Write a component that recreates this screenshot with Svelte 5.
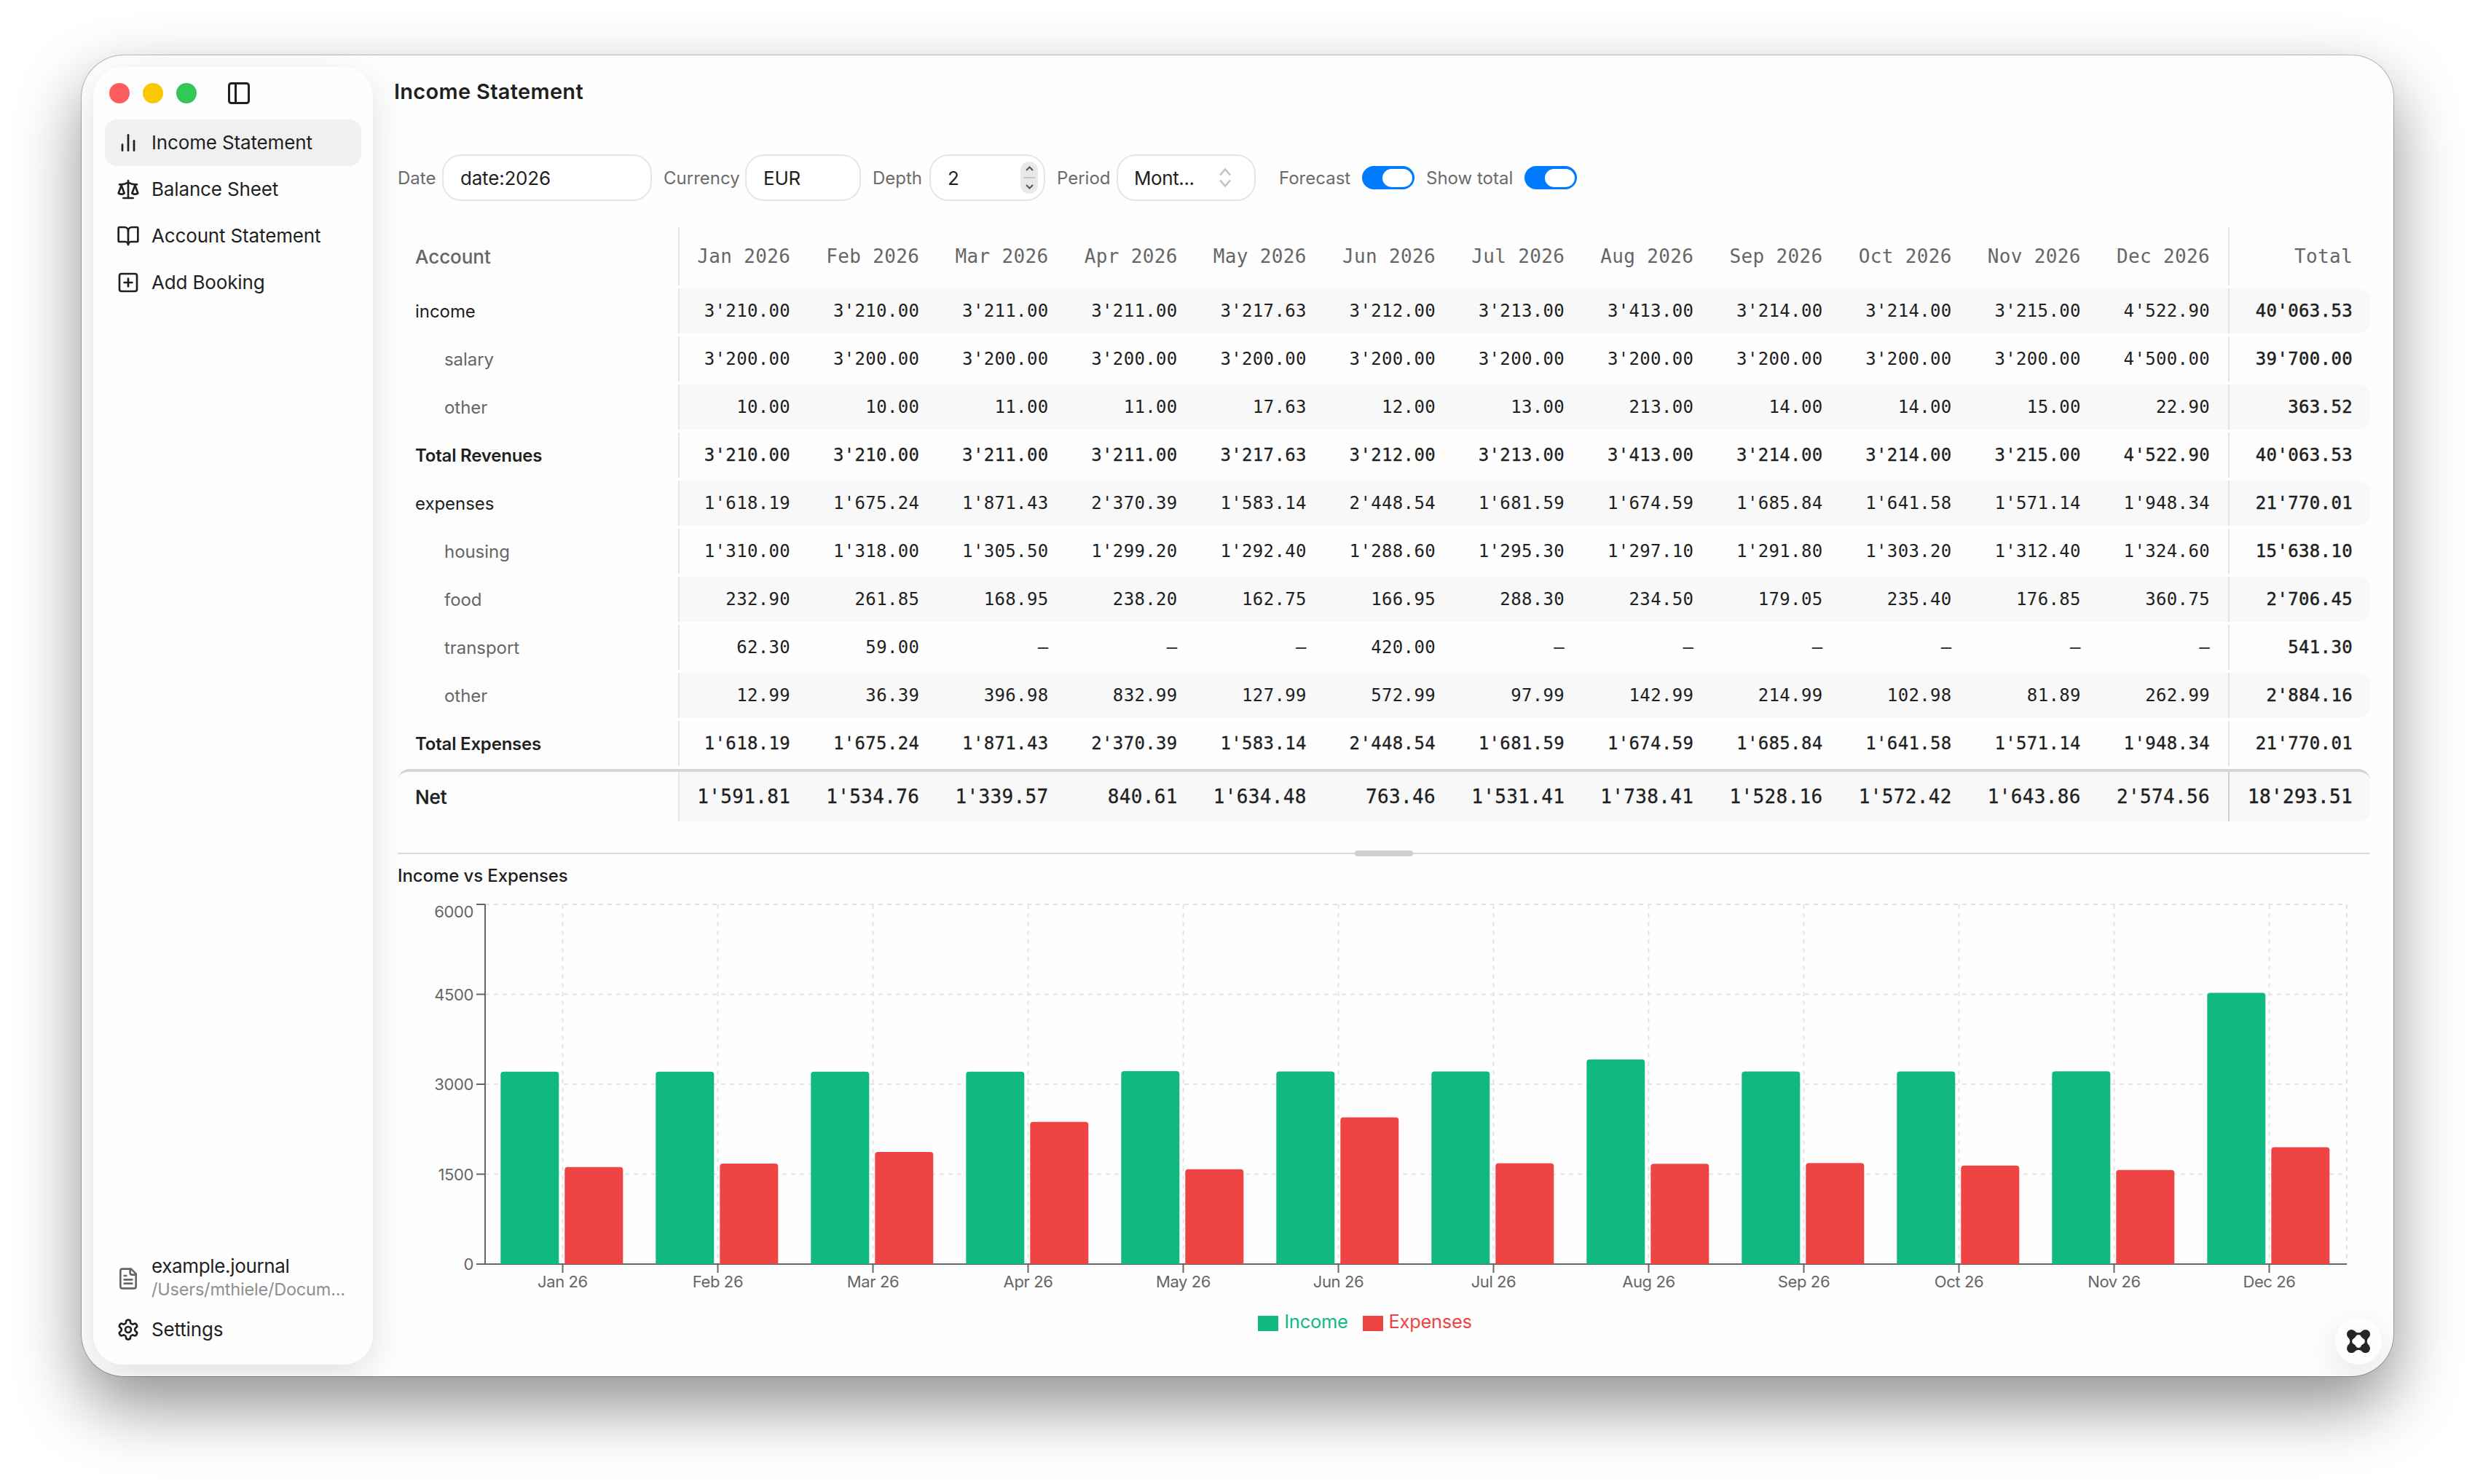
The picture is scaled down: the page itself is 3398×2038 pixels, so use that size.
<script lang="ts">
  type Row = { name: string; kind: string; values: string[]; total: string };

  const months = ['Jan', 'Feb', 'Mar', 'Apr', 'May', 'Jun', 'Jul', 'Aug', 'Sep', 'Oct', 'Nov', 'Dec'];

  const row = (name: string, kind: string, values: string, total: string): Row => ({
    name,
    kind,
    values: values.split(' '),
    total
  });

  const income = "3'210.00 3'210.00 3'211.00 3'211.00 3'217.63 3'212.00 3'213.00 3'413.00 3'214.00 3'214.00 3'215.00 4'522.90";
  const expenses = "1'618.19 1'675.24 1'871.43 2'370.39 1'583.14 2'448.54 1'681.59 1'674.59 1'685.84 1'641.58 1'571.14 1'948.34";

  const rows: Row[] = [
    row('income', 'group', income, "40'063.53"),
    row('salary', 'child', "3'200.00 3'200.00 3'200.00 3'200.00 3'200.00 3'200.00 3'200.00 3'200.00 3'200.00 3'200.00 3'200.00 4'500.00", "39'700.00"),
    row('other', 'child', '10.00 10.00 11.00 11.00 17.63 12.00 13.00 213.00 14.00 14.00 15.00 22.90', '363.52'),
    row('Total Revenues', 'sum', income, "40'063.53"),
    row('expenses', 'group', expenses, "21'770.01"),
    row('housing', 'child', "1'310.00 1'318.00 1'305.50 1'299.20 1'292.40 1'288.60 1'295.30 1'297.10 1'291.80 1'303.20 1'312.40 1'324.60", "15'638.10"),
    row('food', 'child', '232.90 261.85 168.95 238.20 162.75 166.95 288.30 234.50 179.05 235.40 176.85 360.75', "2'706.45"),
    row('transport', 'child', '62.30 59.00 — — — 420.00 — — — — — —', '541.30'),
    row('other', 'child', '12.99 36.39 396.98 832.99 127.99 572.99 97.99 142.99 214.99 102.98 81.89 262.99', "2'884.16"),
    row('Total Expenses', 'sum', expenses, "21'770.01"),
    row('Net', 'net', "1'591.81 1'534.76 1'339.57 840.61 1'634.48 763.46 1'531.41 1'738.41 1'528.16 1'572.42 1'643.86 2'574.56", "18'293.51")
  ];

  const nav = [
    { label: 'Income Statement', icon: ['M18 20V10', 'M12 20V4', 'M6 20v-6'] },
    {
      label: 'Balance Sheet',
      icon: [
        'm16 16 3-8 3 8c-.87.65-1.92 1-3 1s-2.13-.35-3-1Z',
        'm2 16 3-8 3 8c-.87.65-1.92 1-3 1s-2.13-.35-3-1Z',
        'M7 21h10',
        'M12 3v18',
        'M3 7h2c2 0 5-1 7-2 2 1 5 2 7 2h2'
      ]
    },
    {
      label: 'Account Statement',
      icon: [
        'M12 7v14',
        'M3 18a1 1 0 0 1-1-1V4a1 1 0 0 1 1-1h5a4 4 0 0 1 4 4 4 4 0 0 1 4-4h5a1 1 0 0 1 1 1v13a1 1 0 0 1-1 1h-6a3 3 0 0 0-3 3 3 3 0 0 0-3-3z'
      ]
    },
    {
      label: 'Add Booking',
      icon: ['M5 3h14a2 2 0 0 1 2 2v14a2 2 0 0 1-2 2H5a2 2 0 0 1-2-2V5a2 2 0 0 1 2-2z', 'M8 12h8', 'M12 8v8']
    }
  ];
  const fileIcon = [
    'M15 2H6a2 2 0 0 0-2 2v16a2 2 0 0 0 2 2h12a2 2 0 0 0 2-2V7Z',
    'M14 2v4a2 2 0 0 0 2 2h4',
    'M10 9H8',
    'M16 13H8',
    'M16 17H8'
  ];
  const gearIcon = [
    'M12.22 2h-.44a2 2 0 0 0-2 2v.18a2 2 0 0 1-1 1.73l-.43.25a2 2 0 0 1-2 0l-.15-.08a2 2 0 0 0-2.73.73l-.22.38a2 2 0 0 0 .73 2.73l.15.1a2 2 0 0 1 1 1.72v.51a2 2 0 0 1-1 1.74l-.15.09a2 2 0 0 0-.73 2.73l.22.38a2 2 0 0 0 2.73.73l.15-.08a2 2 0 0 1 2 0l.43.25a2 2 0 0 1 1 1.73V20a2 2 0 0 0 2 2h.44a2 2 0 0 0 2-2v-.18a2 2 0 0 1 1-1.73l.43-.25a2 2 0 0 1 2 0l.15.08a2 2 0 0 0 2.73-.73l.22-.39a2 2 0 0 0-.73-2.73l-.15-.08a2 2 0 0 1-1-1.74v-.5a2 2 0 0 1 1-1.74l.15-.09a2 2 0 0 0 .73-2.73l-.22-.38a2 2 0 0 0-2.73-.73l-.15.08a2 2 0 0 1-2 0l-.43-.25a2 2 0 0 1-1-1.73V4a2 2 0 0 0-2-2z',
    'M15 12a3 3 0 1 1-6 0 3 3 0 0 1 6 0z'
  ];

  // chart geometry
  const left = 120;
  const right = 2676;
  const top = 10;
  const bottom = 504;
  const max = 6000;
  const band = (right - left) / months.length;
  const barWidth = 80;
  const ticks = [0, 1500, 3000, 4500, 6000];

  const num = (s: string) => parseFloat(s.replace("'", ''));
  const y = (v: number) => bottom - (v / max) * (bottom - top);

  function bar(x: number, v: number) {
    const t = y(v);
    return `M${x} ${bottom}V${t + 4}a4 4 0 0 1 4-4h${barWidth - 8}a4 4 0 0 1 4 4V${bottom}z`;
  }

  const bars = months.map((m, i) => {
    const x = left + i * band + band * 0.1;
    return {
      label: `${m} 26`,
      center: left + (i + 0.5) * band,
      income: bar(x, num(rows[3].values[i])),
      expenses: bar(x + barWidth + 8, num(rows[9].values[i]))
    };
  });
</script>

{#snippet icon(paths: string[])}
  <svg class="icon" viewBox="0 0 24 24">
    {#each paths as d}<path {d} />{/each}
  </svg>
{/snippet}

<div class="desktop">
  <div class="window">
    <aside class="sidebar">
      <div class="titlebar">
        <i class="light close"></i>
        <i class="light minimize"></i>
        <i class="light zoom"></i>
        <svg class="icon panel" viewBox="0 0 24 24">
          <rect x="3" y="3" width="18" height="18" rx="2" />
          <path d="M9 3v18" />
        </svg>
      </div>
      <nav>
        {#each nav as item, i}
          <div class="item" class:active={i === 0}>
            {@render icon(item.icon)}
            <span>{item.label}</span>
          </div>
        {/each}
      </nav>
      <div class="footer">
        <div class="item file">
          {@render icon(fileIcon)}
          <div class="file-text">
            <span>example.journal</span>
            <span class="path">/Users/mthiele/Docum...</span>
          </div>
        </div>
        <div class="item">
          {@render icon(gearIcon)}
          <span>Settings</span>
        </div>
      </div>
    </aside>

    <main>
      <h1>Income Statement</h1>

      <div class="filters">
        <span class="label date">Date</span>
        <div class="input wide">date:2026</div>
        <span class="label currency">Currency</span>
        <div class="input">EUR</div>
        <span class="label depth">Depth</span>
        <div class="input number">
          2
          <svg class="spinner" viewBox="0 0 24 44">
            <rect width="24" height="44" rx="12" />
            <path class="split" d="M4 22h16" />
            <path d="M8 12l4.500-4.500 4.500 4.500M8 32l4.500 4.500 4.500-4.500" />
          </svg>
        </div>
        <span class="label period">Period</span>
        <div class="input select">
          Mont...
          <svg class="chevrons" viewBox="0 0 20 28">
            <path d="M3 10.500l7-8 7 8M3 17.500l7 8 7-8" />
          </svg>
        </div>
        <span class="label forecast">Forecast</span>
        <div class="toggle"><i></i></div>
        <span class="label total-label">Show total</span>
        <div class="toggle"><i></i></div>
      </div>

      <div class="table">
        <div class="row head">
          <div class="cell account">Account</div>
          {#each months as m}
            <div class="cell">{m} 2026</div>
          {/each}
          <div class="cell total">Total</div>
        </div>
        {#each rows as r, i}
          <div class="row {r.kind}" class:striped={i % 2 === 0}>
            <div class="cell account">{r.name}</div>
            {#each r.values as v}
              <div class="cell">{v}</div>
            {/each}
            <div class="cell total">{r.total}</div>
          </div>
        {/each}
      </div>

      <div class="splitter"><i></i></div>

      <h2>Income vs Expenses</h2>
      <svg class="chart" viewBox="0 0 2708 548">
        <g class="grid">
          {#each ticks as t}
            <path d="M{left} {y(t)}H{right}" />
          {/each}
          {#each bars as b}
            <path d="M{b.center} {top}V{bottom}" />
          {/each}
          <path d="M{right} {top}V{bottom}" />
        </g>
        <g class="axis">
          <path d="M{left} {top}V{bottom}M{left} {bottom}H{right}" />
          {#each ticks as t}
            <path d="M{left - 12} {y(t)}H{left}" />
            <text class="y" x={left - 16} y={y(t) + (t === max ? 18 : 8)}>{t}</text>
          {/each}
          {#each bars as b}
            <path d="M{b.center} {bottom}v12" />
            <text class="x" x={b.center} y={bottom + 32}>{b.label}</text>
          {/each}
        </g>
        {#each bars as b}
          <path class="bar-income" d={b.income} />
          <path class="bar-expenses" d={b.expenses} />
        {/each}
      </svg>
      <div class="legend">
        <span class="key income-key"><i></i>Income</span>
        <span class="key expenses-key"><i></i>Expenses</span>
      </div>
    </main>

    <div class="fab">
      <svg viewBox="-16 -16 32 32">
        <path
          fill-rule="evenodd"
          d="M-6-14.600Q0-8.800 6-14.600L14.600-6Q8.800 0 14.600 6L6 14.600Q0 8.800-6 14.600L-14.600 6Q-8.800 0-14.600-6ZM-2.500-8.200Q0-9.600 2.500-8.200Q4-5 8.200-2.500Q9.600 0 8.200 2.500Q5 4 2.500 8.200Q0 9.600-2.500 8.200Q-4 5-8.200 2.500Q-9.600 0-8.200-2.500Q-5-4-2.500-8.200Z"
        />
        <circle cx="-9.700" cy="-9.700" r="6.300" />
        <circle cx="9.700" cy="-9.700" r="6.300" />
        <circle cx="-9.700" cy="9.700" r="6.300" />
        <circle cx="9.700" cy="9.700" r="6.300" />
      </svg>
    </div>
  </div>
</div>

<style>
:global(body) {
  background: #fff;
}

.desktop {
  box-sizing: border-box;
  width: 3398px;
  height: 2038px;
  padding: 76px 112px 148px;
  overflow: hidden;
  font-family: Inter, "Liberation Sans", sans-serif;
  font-size: 26px;
  color: #1f1f1f;
}

.window {
  position: relative;
  display: flex;
  box-sizing: border-box;
  height: 1814px;
  padding: 16px 0 16px 16px;
  border-radius: 58px;
  background: #fefefe;
  box-shadow:
    0 0 0 1px rgba(0, 0, 0, 0.24),
    0 40px 92px rgba(0, 0, 0, 0.44);
  overflow: hidden;
}

/* sidebar */
.sidebar {
  display: flex;
  flex-direction: column;
  box-sizing: border-box;
  width: 384px;
  padding: 16px;
  border-radius: 40px;
  background: #fefefe;
  box-shadow: 0 16px 52px rgba(0, 0, 0, 0.12);
}

.titlebar {
  display: flex;
  align-items: center;
  gap: 18px;
  height: 40px;
  margin-bottom: 16px;
  padding-left: 6px;
}

.light {
  width: 28px;
  height: 28px;
  border-radius: 50%;
}

.close {
  background: #ff5c5f;
}

.minimize {
  background: #fac800;
}

.zoom {
  background: #33c758;
}

.icon {
  flex: none;
  width: 32px;
  height: 32px;
  fill: none;
  stroke: #1f1f1f;
  stroke-width: 2;
  stroke-linecap: round;
  stroke-linejoin: round;
}

.panel {
  width: 36px;
  height: 36px;
  margin-left: 22px;
}

.item {
  display: flex;
  align-items: center;
  gap: 16px;
  height: 64px;
  padding-left: 16px;
  border-radius: 16px;
  letter-spacing: -0.15px;
}

.item > span {
  margin-top: -1px;
}

.active {
  background: #f0f0f0;
}

.footer {
  margin-top: auto;
}

.file {
  height: 76px;
  letter-spacing: -0.35px;
}

.file .icon {
  stroke: #666;
}

.file-text {
  display: flex;
  flex-direction: column;
  margin-top: -2px;
  line-height: 32px;
}

.path {
  font-size: 23.5px;
  letter-spacing: -0.2px;
  color: #8f8f8f;
}

/* content */
main {
  display: flex;
  flex: 1;
  flex-direction: column;
  margin-top: -16px;
  padding: 0 32px 0 34px;
}

h1 {
  height: 100px;
  margin: 0 0 36px -5px;
  font-size: 29px;
  font-weight: 600;
  line-height: 99px;
  letter-spacing: 0.3px;
}

.filters {
  display: flex;
  align-items: center;
  height: 64px;
}

.label {
  font-size: 24px;
  color: #6b6b6b;
}

.date {
  width: 61px;
}

.currency {
  width: 112px;
  margin-left: 16px;
}

.depth {
  width: 78px;
  margin-left: 16px;
}

.period {
  width: 82px;
  margin-left: 16px;
}

.forecast {
  width: 114px;
  margin-left: 32px;
}

.total-label {
  width: 135px;
  margin-left: 16px;
}

.input {
  display: flex;
  align-items: center;
  justify-content: space-between;
  box-sizing: border-box;
  width: 159px;
  height: 64px;
  padding: 0 24px 0 23px;
  border: 2px solid #e6e6e6;
  border-radius: 26px;
  background: #fff;
  letter-spacing: -0.2px;
}

.wide {
  width: 288px;
}

.number {
  padding-right: 8px;
}

.select {
  width: 191px;
  padding-right: 30px;
  padding-left: 22px;
  letter-spacing: -0.4px;
}

.spinner {
  width: 24px;
  height: 44px;
  fill: #e8e8e8;
}

.spinner path {
  fill: none;
  stroke: #555;
  stroke-width: 2;
}

.spinner .split {
  stroke: #c6c6c6;
}

.chevrons {
  width: 20px;
  height: 28px;
  fill: none;
  stroke: #c4c4c4;
  stroke-width: 2.6;
}

.toggle {
  display: flex;
  align-items: center;
  justify-content: flex-end;
  box-sizing: border-box;
  width: 72px;
  height: 32px;
  padding-right: 3px;
  border-radius: 16px;
  background: #007aff;
}

.toggle i {
  width: 41px;
  height: 25px;
  border-radius: 13px;
  background: #fff;
}

.table {
  display: flex;
  flex-direction: column;
  gap: 4px;
  margin-top: 36px;
}

.row {
  display: grid;
  grid-template-columns: 387px repeat(12, 1fr) 195px;
  box-sizing: border-box;
  height: 62px;
  border-radius: 16px;
  font-family: "DejaVu Sans Mono", "Liberation Mono", monospace;
  font-size: 24px;
  letter-spacing: 0.35px;
  overflow: hidden;
}

.cell {
  display: flex;
  align-items: center;
  justify-content: flex-end;
  padding-right: 25px;
  white-space: nowrap;
}

.account {
  justify-content: flex-start;
  padding-left: 24px;
  border-right: 2px solid #e6e6e6;
  background: #fdfdfd;
  font-family: Inter, "Liberation Sans", sans-serif;
  letter-spacing: -0.05px;
}

.total {
  padding-right: 24px;
  border-left: 2px solid #e4e4e4;
  -webkit-text-stroke: 0.5px currentColor;
}

.head {
  height: 80px;
  font-size: 26px;
  color: #666;
}

.head .account {
  font-weight: 500;
}

.head .total {
  -webkit-text-stroke: 0;
}

.striped {
  background: #f8f8f8;
}

.child .account {
  padding-left: 64px;
  color: #666;
}

.sum {
  -webkit-text-stroke: 0.3px currentColor;
}

.sum .account {
  font-weight: 600;
  letter-spacing: -0.2px;
  -webkit-text-stroke: 0;
}

.net {
  height: 72px;
  border-top: 4px solid #d6d6d6;
  font-size: 26px;
  -webkit-text-stroke: 0.3px currentColor;
}

.net .account {
  font-weight: 500;
}

.net .total {
  border-color: #d0d0d0;
}

.splitter {
  display: flex;
  align-items: center;
  justify-content: center;
  height: 2px;
  margin-top: 43px;
  background: #d9d9d9;
}

.splitter i {
  flex: none;
  width: 80px;
  height: 8px;
  border-radius: 4px;
  background: #cfcfcf;
}

h2 {
  height: 32px;
  margin: 14px 0 13px;
  font-size: 24px;
  font-weight: 500;
  line-height: 32px;
  letter-spacing: -0.1px;
}

.chart {
  width: 2708px;
  height: 548px;
}

.grid path {
  fill: none;
  stroke: #e4e4e4;
  stroke-width: 2;
  stroke-dasharray: 6 6;
}

.axis path {
  fill: none;
  stroke: #666;
  stroke-width: 2;
}

.axis text {
  fill: #666;
  font-size: 22px;
  letter-spacing: -0.4px;
}

.y {
  text-anchor: end;
}

.x {
  text-anchor: middle;
}

.bar-income {
  fill: #10b981;
}

.bar-expenses {
  fill: #ef4444;
}

.legend {
  display: flex;
  justify-content: center;
  gap: 20px;
  margin-top: 19px;
  padding-right: 52px;
  font-size: 25.5px;
  line-height: 32px;
  letter-spacing: -0.3px;
}

.key {
  display: flex;
  align-items: center;
  gap: 8px;
}

.key i {
  width: 28px;
  height: 21px;
  margin-top: 4px;
  background: currentColor;
}

.income-key {
  color: #10b981;
}

.expenses-key {
  color: #ef4444;
}

.fab {
  position: absolute;
  right: 16px;
  bottom: 16px;
  display: flex;
  align-items: center;
  justify-content: center;
  width: 64px;
  height: 64px;
  border-radius: 50%;
  background: #fefefe;
  box-shadow: 0 16px 52px rgba(0, 0, 0, 0.12);
}

.fab svg {
  width: 32px;
  height: 32px;
  fill: #262626;
}
</style>
